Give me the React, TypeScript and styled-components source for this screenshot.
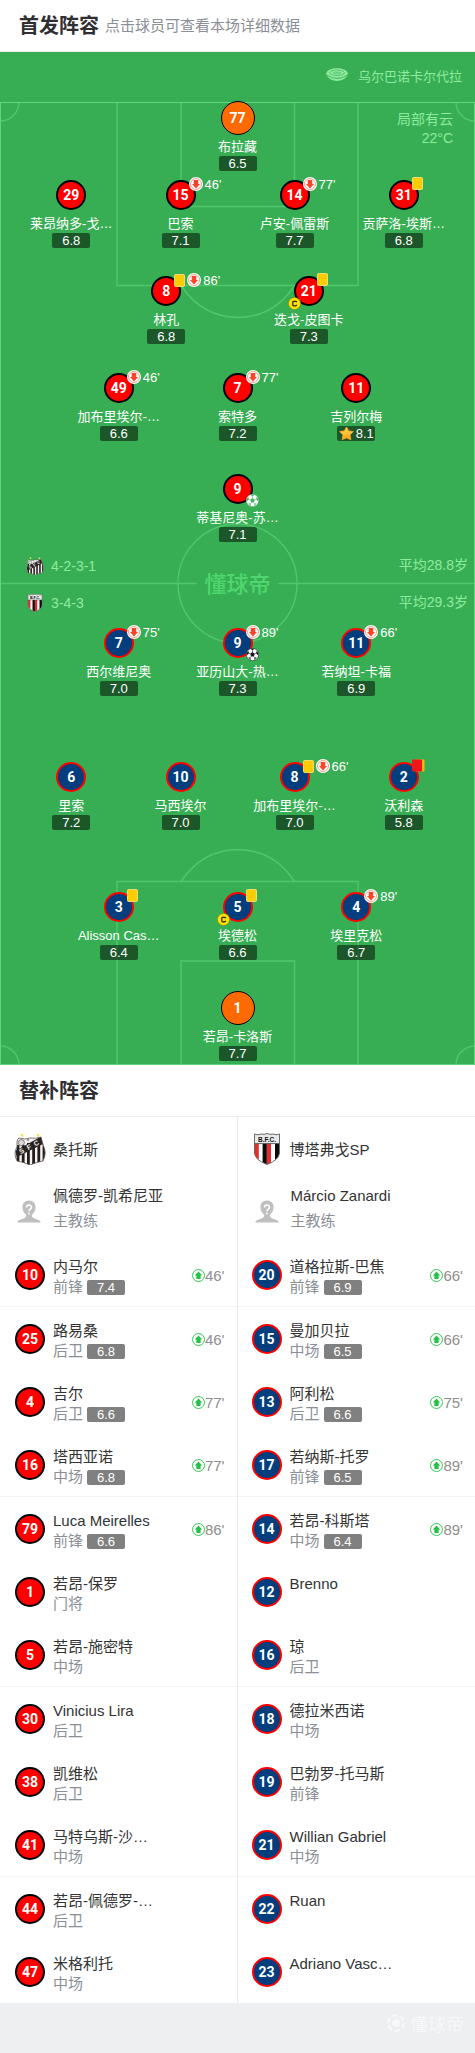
import React from "react";
import styled, { createGlobalStyle } from "styled-components";

const GlobalStyle = createGlobalStyle`
  * { box-sizing: border-box; }
  body {
    margin: 0;
    background: #edeff1;
    color: #333;
    font-family: "Liberation Sans", "Noto Sans CJK SC", sans-serif;
  }
  h2, p, ul, ol { margin: 0; padding: 0; font-weight: normal; list-style: none; }
  svg { flex: none; }
`;

/* ---------- data ---------- */

type Kit = "home" | "away" | "keeper";
type CardKind = "yellow" | "secondYellow";

interface PitchPlayer {
  num: number;
  name: string;
  score: string;
  kit: Kit;
  card?: CardKind;
  off?: string;
  captain?: boolean;
  goal?: "faded" | "solid";
  best?: boolean;
}

interface Line {
  gap: number;
  players: PitchPlayer[];
}

const homeLines: Line[] = [
  { gap: 0, players: [{ num: 77, name: "布拉藏", score: "6.5", kit: "keeper" }] },
  {
    gap: 7,
    players: [
      { num: 29, name: "莱昂纳多-戈…", score: "6.8", kit: "home" },
      { num: 15, name: "巴索", score: "7.1", kit: "home", off: "46'" },
      { num: 14, name: "卢安-佩雷斯", score: "7.7", kit: "home", off: "77'" },
      { num: 31, name: "贡萨洛-埃斯…", score: "6.8", kit: "home", card: "yellow" },
    ],
  },
  {
    gap: 26,
    players: [
      { num: 8, name: "林孔", score: "6.8", kit: "home", card: "yellow", off: "86'" },
      { num: 21, name: "迭戈-皮图卡", score: "7.3", kit: "home", card: "yellow", captain: true },
    ],
  },
  {
    gap: 27,
    players: [
      { num: 49, name: "加布里埃尔-…", score: "6.6", kit: "home", off: "46'" },
      { num: 7, name: "索特多", score: "7.2", kit: "home", off: "77'" },
      { num: 11, name: "吉列尔梅", score: "8.1", kit: "home", best: true },
    ],
  },
  { gap: 31, players: [{ num: 9, name: "蒂基尼奥-苏…", score: "7.1", kit: "home", goal: "faded" }] },
];

const awayLines: Line[] = [
  {
    gap: 0,
    players: [
      { num: 7, name: "西尔维尼奥", score: "7.0", kit: "away", off: "75'" },
      { num: 9, name: "亚历山大-热…", score: "7.3", kit: "away", off: "89'", goal: "solid" },
      { num: 11, name: "若纳坦-卡福", score: "6.9", kit: "away", off: "66'" },
    ],
  },
  {
    gap: 64,
    players: [
      { num: 6, name: "里索", score: "7.2", kit: "away" },
      { num: 10, name: "马西埃尔", score: "7.0", kit: "away" },
      { num: 8, name: "加布里埃尔-…", score: "7.0", kit: "away", card: "yellow", off: "66'" },
      { num: 2, name: "沃利森", score: "5.8", kit: "away", card: "secondYellow" },
    ],
  },
  {
    gap: 60,
    players: [
      { num: 3, name: "Alisson Cas…", score: "6.4", kit: "away", card: "yellow" },
      { num: 5, name: "埃德松", score: "6.6", kit: "away", card: "yellow", captain: true },
      { num: 4, name: "埃里克松", score: "6.7", kit: "away", off: "89'" },
    ],
  },
  { gap: 31, players: [{ num: 1, name: "若昂-卡洛斯", score: "7.7", kit: "keeper" }] },
];

interface BenchPlayer {
  num: number;
  name: string;
  role?: string;
  score?: string;
  on?: string;
}

const homeBench: BenchPlayer[] = [
  { num: 10, name: "内马尔", role: "前锋", score: "7.4", on: "46'" },
  { num: 25, name: "路易桑", role: "后卫", score: "6.8", on: "46'" },
  { num: 4, name: "吉尔", role: "后卫", score: "6.6", on: "77'" },
  { num: 16, name: "塔西亚诺", role: "中场", score: "6.8", on: "77'" },
  { num: 79, name: "Luca Meirelles", role: "前锋", score: "6.6", on: "86'" },
  { num: 1, name: "若昂-保罗", role: "门将" },
  { num: 5, name: "若昂-施密特", role: "中场" },
  { num: 30, name: "Vinicius Lira", role: "后卫" },
  { num: 38, name: "凯维松", role: "后卫" },
  { num: 41, name: "马特乌斯-沙…", role: "中场" },
  { num: 44, name: "若昂-佩德罗-…", role: "后卫" },
  { num: 47, name: "米格利托", role: "中场" },
];

const awayBench: BenchPlayer[] = [
  { num: 20, name: "道格拉斯-巴焦", role: "前锋", score: "6.9", on: "66'" },
  { num: 15, name: "曼加贝拉", role: "中场", score: "6.5", on: "66'" },
  { num: 13, name: "阿利松", role: "后卫", score: "6.6", on: "75'" },
  { num: 17, name: "若纳斯-托罗", role: "前锋", score: "6.5", on: "89'" },
  { num: 14, name: "若昂-科斯塔", role: "中场", score: "6.4", on: "89'" },
  { num: 12, name: "Brenno" },
  { num: 16, name: "琼", role: "后卫" },
  { num: 18, name: "德拉米西诺", role: "中场" },
  { num: 19, name: "巴勃罗-托马斯", role: "前锋" },
  { num: 21, name: "Willian Gabriel", role: "中场" },
  { num: 22, name: "Ruan" },
  { num: 23, name: "Adriano Vasc…" },
];

/* ---------- shared pieces ---------- */

const kitFill = { home: "#ff0000", away: "#003e7e", keeper: "#ff6a00" };
const kitRing = { home: "#000", away: "#ff0000", keeper: "#000" };

const Shirt = styled.span<{ $kit: Kit }>`
  display: flex;
  flex: none;
  align-items: center;
  justify-content: center;
  width: ${(p) => (p.$kit === "keeper" ? 34 : 30)}px;
  height: ${(p) => (p.$kit === "keeper" ? 34 : 30)}px;
  border: ${(p) => (p.$kit === "keeper" ? 1 : 2)}px solid ${(p) => kitRing[p.$kit]};
  border-radius: 50%;
  background: ${(p) => kitFill[p.$kit]};
  color: #fff;
  font: 700 14px/20px Roboto, "Liberation Sans", sans-serif;
`;

const SectionHead = styled.header`
  display: flex;
  align-items: center;
  gap: 6px;
  height: 52px;
  padding: 0 19px;
  border-bottom: 1px solid #eee;
  background: #fff;
`;

const SectionTitle = styled.h2`
  color: #2f2f33;
  font-size: 20px;
  font-weight: 700;
  line-height: 28px;
`;

const SectionHint = styled.p`
  color: #8a8f96;
  font-size: 15px;
  line-height: 22px;
`;

/* ---------- icons ---------- */

const StadiumIcon = () => (
  <svg width="22" height="14" viewBox="0 0 22 14" aria-hidden="true">
    <path d="M0 4.5 Q11 14.5 22 4.5 L21 8 Q18 12.7 11 13 Q4 12.7 1 8 Z" fill="#8eea9f" />
    <ellipse cx="11" cy="5" rx="10.6" ry="4.7" fill="#8eea9f" />
    <ellipse cx="11" cy="4.8" rx="7.4" ry="2.7" fill="none" stroke="#38ae54" strokeWidth="0.8" strokeDasharray="2 0.7" />
    <ellipse cx="11" cy="4.9" rx="4.2" ry="1.3" fill="#38ae54" opacity="0.4" />
    <path d="M0.6 7 Q11 14 21.4 7" fill="none" stroke="#38ae54" strokeWidth="0.8" />
  </svg>
);

const ArrowIcon = ({ up }: { up?: boolean }) => {
  const tint = up ? "#22c245" : "#fa4529";
  const size = up ? 13 : 14;
  return (
    <svg width={size} height={size} viewBox="0 0 13 13" aria-hidden="true">
      <circle cx="6.5" cy="6.5" r="6.5" fill="#fff" />
      <circle cx="6.5" cy="6.5" r={up ? 6 : 5.1} fill="none" stroke={tint} strokeWidth={up ? 0.9 : 0.5} />
      <path
        d="M6.5 2.4 L10.2 6.5 H8.6 V10.1 H4.4 V6.5 H2.8 Z"
        fill={tint}
        transform={up ? undefined : "rotate(180 6.5 6.5)"}
      />
    </svg>
  );
};

const CardIcon = ({ kind }: { kind: CardKind }) => (
  <svg width={kind === "yellow" ? 11 : 13} height="13" viewBox={kind === "yellow" ? "0 0 11 13" : "0 0 13 13"} aria-hidden="true">
    {kind === "yellow" ? (
      <rect x="0.5" y="0.5" width="10" height="12" rx="1" fill="#ffcc00" stroke="#f3dc76" />
    ) : (
      <>
        <rect x="3" y="0.5" width="9.5" height="12" rx="1" fill="#ffb400" />
        <rect x="0" y="0.5" width="10" height="12" rx="1" fill="#f0141c" />
      </>
    )}
  </svg>
);

const BallIcon = ({ faded }: { faded: boolean }) => {
  const ink = faded ? "#4bb267" : "#17171a";
  return (
    <svg width="13" height="13" viewBox="0 0 13 13" aria-hidden="true">
      <circle cx="6.5" cy="6.5" r="6.2" fill="#fff" stroke={ink} strokeWidth="0.6" />
      <path
        fill={ink}
        d="M6.5 4.1 L8.8 5.8 L7.9 8.5 H5.1 L4.2 5.8 Z M4.6 0.7 H8.4 L6.5 2.4 Z M0.5 5.2 L2.3 3 L3 5.2 L1 7.3 Z M12.5 5.2 L10.7 3 L10 5.2 L12 7.3 Z M2.3 9.2 L4.4 9.6 L4.9 12.3 Z M10.7 9.2 L8.6 9.6 L8.1 12.3 Z"
      />
      <path
        d="M6.5 4.1 V2.4 M8.8 5.8 L10 5.2 M7.9 8.5 L8.6 9.6 M5.1 8.5 L4.4 9.6 M4.2 5.8 L3 5.2"
        stroke={ink}
        strokeWidth="0.6"
      />
    </svg>
  );
};

const CaptainIcon = () => (
  <svg width="13" height="13" viewBox="0 0 13 13" aria-hidden="true">
    <circle cx="6.5" cy="6.5" r="6.1" fill="#ffe100" stroke="#7d8a10" strokeWidth="0.7" />
    <path d="M8.5 5.2 V4.9 Q8.5 4.3 7.6 4.3 H5.7 Q4.8 4.3 4.8 5 V8 Q4.8 8.8 5.7 8.8 H7.6 Q8.5 8.8 8.5 8.1 V7.8" fill="none" stroke="#222" strokeWidth="1.2" />
  </svg>
);

const StarIcon = () => (
  <svg width="15" height="15" viewBox="0 0 14 14" aria-hidden="true">
    <defs>
      <linearGradient id="star" x1="0" y1="0" x2="0" y2="1">
        <stop offset="0" stopColor="#ffe45c" />
        <stop offset="1" stopColor="#ff9c14" />
      </linearGradient>
    </defs>
    <path
      d="M7 0.9 L8.9 4.6 L13.3 5.2 L10.2 8.3 L11 12.7 L7 11 L3 12.7 L3.8 8.3 L0.7 5.2 L5.1 4.6 Z"
      fill="url(#star)"
      stroke="#ffa51f"
      strokeWidth="0.9"
      strokeLinejoin="round"
    />
  </svg>
);

const HomeCrest = ({ size }: { size: number }) => (
  <svg width={size} height={size} viewBox="0 0 32 32" aria-hidden="true">
    <path d="M8 0 L8.8 1.4 L10.2 1.6 L9 2.6 L9.3 4 L8 3.2 L6.7 4 L7 2.6 L5.8 1.6 L7.2 1.4 Z" fill="#f4e34a" />
    <path d="M24 0 L24.8 1.4 L26.2 1.6 L25 2.6 L25.3 4 L24 3.2 L22.7 4 L23 2.6 L21.8 1.6 L23.2 1.4 Z" fill="#f4e34a" />
    <clipPath id="home-shield">
      <path d="M3 9 Q3 6 5 5 Q11 7 16 5 Q21 6 27 4 Q28 8 29.5 13 Q33 20 29 28 Q23 29 16 32 Q9 29 3 28 Q-1 20 3 14 Z" />
    </clipPath>
    <g clipPath="url(#home-shield)">
      <rect width="32" height="32" fill="#f5f3f2" />
      <path d="M4 12 V32 M9.2 12 V32 M14.4 10 V32 M19.6 10 V32 M24.8 8 V32 M30 8 V32" stroke="#231d1c" strokeWidth="2.8" />
      <path d="M1 18 L28 3 L31 10 L3 24 Z" fill="#282220" />
      <circle cx="7.4" cy="9.6" r="3" fill="#dedad8" stroke="#6a6462" strokeWidth="0.8" />
      <circle cx="14" cy="7" r="1.4" fill="#a8a3a1" />
    </g>
    <path
      d="M3 9 Q3 6 5 5 Q11 7 16 5 Q21 6 27 4 Q28 8 29.5 13 Q33 20 29 28 Q23 29 16 32 Q9 29 3 28 Q-1 20 3 14 Z"
      fill="none"
      stroke="#5a5452"
      strokeWidth="0.8"
    />
    <g fill="#f5f3f2" fontFamily="Liberation Sans, sans-serif" fontWeight="700" fontSize="7" transform="rotate(-28 16 14)">
      <text x="4.5" y="16">S</text>
      <text x="13" y="16">F</text>
      <text x="21" y="16">C</text>
    </g>
  </svg>
);

const AwayCrest = ({ size }: { size: number }) => (
  <svg width={size} height={size} viewBox="0 0 32 32" aria-hidden="true">
    <clipPath id="away-shield">
      <path d="M3.5 1 Q7 2.6 10 1 Q13 2 16 0.5 Q19 2 22 1 Q25 2.6 28.5 1 V20 Q28 27 16 31.5 Q4 27 3.5 20 Z" />
    </clipPath>
    <g clipPath="url(#away-shield)">
      <rect width="32" height="32" fill="#fff" />
      <path d="M3 10 H7.8 V32 H3 Z M15.8 10 H20 V32 H15.8 Z" fill="#ea2a2a" />
      <path d="M11.6 10 H15.8 V32 H11.6 Z M24 10 H29 V32 H24 Z" fill="#0b0b0b" />
      <rect x="3" y="0" width="26" height="10.6" fill="#e9e9e9" />
      <path d="M3 10.6 H29" stroke="#555" strokeWidth="0.9" />
    </g>
    <path
      d="M3.5 1 Q7 2.6 10 1 Q13 2 16 0.5 Q19 2 22 1 Q25 2.6 28.5 1 V20 Q28 27 16 31.5 Q4 27 3.5 20 Z"
      fill="none"
      stroke="#6a6a6a"
      strokeWidth="1"
    />
    <text x="16" y="8.6" textAnchor="middle" fill="#111" fontFamily="Liberation Sans, sans-serif" fontWeight="700" fontSize="6.5">
      B.F.C.
    </text>
  </svg>
);

const CoachIcon = () => (
  <svg width="24" height="23" viewBox="0 0 24 23" aria-hidden="true">
    <path d="M12 0.5 C7.6 0.5 5.4 3.6 5.4 7.2 C5.4 10.8 7.4 13.4 9 14.6 C9.6 16.6 8.6 17.6 6.6 18.4 C3.4 19.5 0.8 20 0.3 22.6 H23.7 C23.2 20 20.6 19.5 17.4 18.4 C15.4 17.6 14.4 16.6 15 14.6 C16.6 13.4 18.6 10.8 18.6 7.2 C18.6 3.6 16.4 0.5 12 0.5 Z" fill="#bfbfbf" />
    <path d="M9.5 7.4 C9.5 4.3 14.5 4.3 14.5 7.3 C14.5 9.2 12 9.2 12 11.3" fill="none" stroke="#fff" strokeWidth="1.5" />
    <circle cx="12" cy="13.4" r="0.9" fill="#fff" />
  </svg>
);

const BrandBall = () => (
  <svg width="18" height="18" viewBox="0 0 18 18" aria-hidden="true">
    <circle cx="9" cy="9" r="7.8" fill="none" stroke="#f8f9fa" strokeWidth="2.2" strokeDasharray="5.2 2.97" />
    <path d="M9 5 L12.5 7 V11 L9 13 L5.5 11 V7 Z" fill="#f8f9fa" />
  </svg>
);

/* ---------- pitch ---------- */

const Pitch = styled.section`
  position: relative;
  padding-bottom: 4px;
  background: #38ae54;
`;

const FieldArt = styled.svg`
  position: absolute;
  top: 50px;
  left: 0;
  width: 100%;
  height: calc(100% - 50px);
`;

const Stadium = styled.div`
  display: flex;
  align-items: center;
  justify-content: flex-end;
  gap: 10px;
  height: 49px;
  padding-right: 13px;
  color: #8eea9f;
  font-size: 13px;
  line-height: 20px;
  svg { margin-bottom: 4px; }
`;

const Weather = styled.div`
  position: absolute;
  top: 58px;
  right: 22px;
  color: #8eea9f;
  font-size: 14px;
  line-height: 19px;
  text-align: right;
`;

const lineShape: Record<number, string> = {
  1: "grid-template-columns: 1fr;",
  2: "grid-template-columns: 1fr 1fr; padding: 0 20%;",
  3: "grid-template-columns: 1fr 1fr 1fr; padding: 0 12.5%;",
  4: "grid-template-columns: 23fr 23fr 25fr 21fr; padding: 0 4.5% 0 3.5%;",
};

const PlayerLine = styled.div<{ $count: number; $gap: number }>`
  position: relative;
  display: grid;
  justify-items: center;
  margin-top: ${(p) => p.$gap}px;
  ${(p) => lineShape[p.$count]}
`;

const PlayerButton = styled.button`
  position: relative;
  display: flex;
  flex-direction: column;
  align-items: center;
  width: 84px;
  padding: 0;
  border: 0;
  background: none;
  color: #fff;
  font-family: inherit;
  cursor: pointer;
`;

const ShirtSlot = styled.span`
  display: flex;
  align-items: center;
  height: 34px;
`;

const PlayerName = styled.span`
  height: 21px;
  font-size: 13px;
  line-height: 23px;
  white-space: nowrap;
`;

const Score = styled.span<{ $bench?: boolean }>`
  display: flex;
  flex: none;
  align-items: center;
  justify-content: center;
  gap: 2px;
  width: 38px;
  height: 15px;
  border-radius: 2px;
  background: ${(p) => (p.$bench ? "#808080" : "rgba(0, 0, 0, 0.5)")};
  color: #fff;
  font-size: 13px;
  line-height: 15px;
`;

const Events = styled.span`
  position: absolute;
  top: -1px;
  left: calc(50% + 8px);
  display: flex;
  align-items: center;
  gap: 2px;
  font-size: 13px;
  line-height: 13px;
`;

const CaptainMark = styled.span`
  position: absolute;
  top: 23px;
  right: calc(50% + 8px);
  display: flex;
`;

const GoalMark = styled.span`
  position: absolute;
  top: 22px;
  left: calc(50% + 8px);
  display: flex;
`;

const Midfield = styled.div`
  position: relative;
  display: grid;
  grid-template-columns: 1fr auto 1fr;
  align-items: center;
  padding: 5px 7px 5px 26px;
  color: #8eea9f;
  font-size: 14px;
`;

const TeamShape = styled.p`
  display: flex;
  align-items: center;
  gap: 7px;
  height: 37px;
`;

const TeamAge = styled.p`
  height: 37px;
  line-height: 37px;
  text-align: right;
`;

const PitchBrand = styled.span`
  margin-right: 19px;
  padding-bottom: 4px;
  color: #4fd66e;
  font-family: "Noto Sans CJK SC", sans-serif;
  font-size: 22px;
  font-weight: 500;
  line-height: 24px;
`;

const Field = () => (
  <FieldArt viewBox="0 0 475 963" preserveAspectRatio="none" aria-hidden="true">
    <g fill="none" stroke="#4fc76c" strokeWidth="1.4">
      <path d="M117 0 V183.5 H358 V0 M181 0 V104.5 H294.5 V0 M181 183.5 Q202 215 238 215.5 Q274 215 294.5 183.5" />
      <path d="M117 963 V779.5 H358 V963 M181 963 V859 H294.5 V963 M181 779.5 Q202 748 238 747.5 Q274 748 294.5 779.5" />
      <circle cx="237.5" cy="481.5" r="59.5" />
      <path d="M0 481.5 H197 M278 481.5 H475" />
      <path d="M19 0 A19 19 0 0 1 0 19 M456 0 A19 19 0 0 0 475 19 M19 963 A19 19 0 0 0 0 944 M456 963 A19 19 0 0 1 475 944" />
    </g>
    <rect x="0.5" y="0.5" width="474" height="962" fill="none" stroke="#5fd67e" />
  </FieldArt>
);

const PitchLine = ({ line }: { line: Line }) => (
  <PlayerLine $count={line.players.length} $gap={line.gap}>
    {line.players.map((p) => (
      <PlayerButton key={p.num} type="button">
        <ShirtSlot>
          <Shirt $kit={p.kit}>{p.num}</Shirt>
        </ShirtSlot>
        <PlayerName>{p.name}</PlayerName>
        <Score>
          {p.best && <StarIcon />}
          {p.score}
        </Score>
        {(p.card || p.off) && (
          <Events>
            {p.card && <CardIcon kind={p.card} />}
            {p.off && <ArrowIcon />}
            {p.off}
          </Events>
        )}
        {p.captain && <CaptainMark><CaptainIcon /></CaptainMark>}
        {p.goal && <GoalMark><BallIcon faded={p.goal === "faded"} /></GoalMark>}
      </PlayerButton>
    ))}
  </PlayerLine>
);

/* ---------- bench ---------- */

const Bench = styled.div`
  display: grid;
  grid-template-columns: calc(50% - 1px) minmax(0, 1fr);
  background: #fff;
`;

const BenchColumn = styled.section`
  min-width: 0;
  & + & {
    border-left: 1px solid #e8e8ea;
  }
`;

const Club = styled.div`
  display: flex;
  align-items: center;
  gap: 7px;
  height: 63px;
  padding-left: 14px;
  color: #333;
  font-size: 15px;
  section + section > & {
    padding-left: 13px;
  }
`;

const Coach = styled.div`
  display: flex;
  align-items: center;
  gap: 12px;
  height: 63px;
  padding-left: 17px;
`;

const CoachText = styled.div`
  height: 57px;
  font-size: 15px;
  line-height: 25px;
`;

const BenchRow = styled.li`
  display: flex;
  align-items: flex-start;
  gap: 8px;
  height: 63px;
  padding: 14px 12px 0 15px;
  &:nth-child(3n + 1) {
    height: 64px;
    border-bottom: 1px solid #f3f3f5;
  }
  section + section & {
    padding-left: 14px;
  }
  & > ${Shirt} {
    margin-top: 3px;
  }
`;

const BenchInfo = styled.div`
  flex: 1;
  min-width: 0;
`;

const BenchName = styled.p`
  color: #333;
  font-size: 15px;
  line-height: 20px;
  white-space: nowrap;
`;

const BenchRole = styled.p`
  display: flex;
  align-items: center;
  gap: 4px;
  height: 20px;
  color: #8a8f96;
  font-size: 15px;
  line-height: 20px;
`;

const Muted = styled.p`
  color: #8a8f96;
`;

const CameOn = styled.span`
  display: flex;
  align-items: center;
  height: 36px;
  color: #8e8e8e;
  font-size: 15px;
`;

const BenchTeam = (props: { crest: React.ReactNode; club: string; coach: string; kit: Kit; players: BenchPlayer[] }) => (
  <BenchColumn>
    <Club>
      {props.crest}
      {props.club}
    </Club>
    <Coach>
      <CoachIcon />
      <CoachText>
        <p>{props.coach}</p>
        <Muted>主教练</Muted>
      </CoachText>
    </Coach>
    <ul>
      {props.players.map((p) => (
        <BenchRow key={p.num}>
          <Shirt $kit={props.kit}>{p.num}</Shirt>
          <BenchInfo>
            <BenchName>{p.name}</BenchName>
            <BenchRole>
              {p.role}
              {p.score && <Score $bench>{p.score}</Score>}
            </BenchRole>
          </BenchInfo>
          {p.on && (
            <CameOn>
              <ArrowIcon up />
              {p.on}
            </CameOn>
          )}
        </BenchRow>
      ))}
    </ul>
  </BenchColumn>
);

const Footer = styled.footer`
  display: flex;
  align-items: flex-start;
  justify-content: flex-end;
  gap: 5px;
  height: 50px;
  padding: 11px 11px 0 0;
  background: #edeff1;
  color: #f7f8f9;
  font-family: "Noto Sans CJK SC", sans-serif;
  font-size: 18px;
  line-height: 18px;
`;

export default function App() {
  return (
    <main>
      <GlobalStyle />
      <SectionHead>
        <SectionTitle>首发阵容</SectionTitle>
        <SectionHint>点击球员可查看本场详细数据</SectionHint>
      </SectionHead>
      <Pitch>
        <Field />
        <Stadium>
          <StadiumIcon />
          乌尔巴诺卡尔代拉
        </Stadium>
        <Weather>
          <p>局部有云</p>
          <p>22°C</p>
        </Weather>
        {homeLines.map((line, i) => <PitchLine key={i} line={line} />)}
        <Midfield>
          <div>
            <TeamShape><HomeCrest size={18} />4-2-3-1</TeamShape>
            <TeamShape><AwayCrest size={18} />3-4-3</TeamShape>
          </div>
          <PitchBrand>懂球帝</PitchBrand>
          <div>
            <TeamAge>平均28.8岁</TeamAge>
            <TeamAge>平均29.3岁</TeamAge>
          </div>
        </Midfield>
        {awayLines.map((line, i) => <PitchLine key={i} line={line} />)}
      </Pitch>
      <SectionHead>
        <SectionTitle>替补阵容</SectionTitle>
      </SectionHead>
      <Bench>
        <BenchTeam crest={<HomeCrest size={32} />} club="桑托斯" coach="佩德罗-凯希尼亚" kit="home" players={homeBench} />
        <BenchTeam crest={<AwayCrest size={32} />} club="博塔弗戈SP" coach="Márcio Zanardi" kit="away" players={awayBench} />
      </Bench>
      <Footer>
        <BrandBall />
        懂球帝
      </Footer>
    </main>
  );
}
